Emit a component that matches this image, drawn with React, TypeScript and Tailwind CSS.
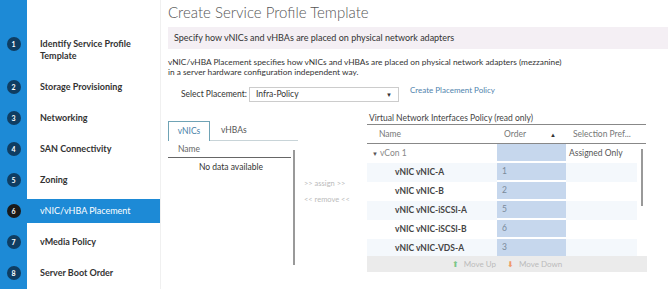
import React from "react";

const steps = [
  { n: 1, label: ["Identify Service Profile", "Template"] },
  { n: 2, label: ["Storage Provisioning"] },
  { n: 3, label: ["Networking"] },
  { n: 4, label: ["SAN Connectivity"] },
  { n: 5, label: ["Zoning"] },
  { n: 6, label: ["vNIC/vHBA Placement"], active: true },
  { n: 7, label: ["vMedia Policy"] },
  { n: 8, label: ["Server Boot Order"] },
];

const rows = [
  { name: "vNIC vNIC-A", order: "1" },
  { name: "vNIC vNIC-B", order: "2" },
  { name: "vNIC vNIC-iSCSI-A", order: "5" },
  { name: "vNIC vNIC-iSCSI-B", order: "6" },
  { name: "vNIC vNIC-VDS-A", order: "3" },
];

function Sidebar() {
  return (
    <div className="w-[160px] shrink-0 h-full bg-[linear-gradient(to_right,#1d8ad6_27px,#ffffff_27px)] pt-[32px] flex flex-col gap-[7px]">
      {steps.map((s) => (
        <div
          key={s.n}
          className={`flex items-start min-h-[24px] ${s.active ? "bg-[#1d8ad6]" : ""}`}
        >
          <div className="w-[27px] shrink-0 flex justify-center pt-[5px]">
            <div
              className={`w-[14px] h-[14px] rounded-full flex items-center justify-center text-[7px] font-bold text-white ${
                s.active ? "bg-[#1a1a1a]" : "bg-[#0f3d62]"
              }`}
            >
              {s.n}
            </div>
          </div>
          <div
            className={`pl-[13px] pt-[6px] pb-[6px] text-[9px] leading-[12px] ${
              s.active ? "text-white font-normal" : "text-[#333] font-bold"
            }`}
          >
            {s.label.map((l) => (
              <div key={l}>{l}</div>
            ))}
          </div>
        </div>
      ))}
    </div>
  );
}

function LeftPanel() {
  return (
    <div className="w-[130px] shrink-0 mt-[10px]">
      <div className="flex items-end h-[19px] border-b border-[#c8d4d8]">
        <div className="w-[42px] h-[20px] border border-b-0 border-[#6fa3b5] bg-white -mb-px flex items-center justify-center text-[8.5px] text-[#4a7fa8]">
          vNICs
        </div>
        <div className="ml-[11px] h-[19px] flex items-center text-[8.5px] text-[#555]">vHBAs</div>
      </div>
      <div className="flex">
        <div className="w-[123px]">
          <div className="h-[17px] border-b border-[#666] flex items-center pl-[10px] text-[8.5px] text-[#666]">
            Name
          </div>
          <div className="text-[8.5px] text-[#333] pl-[31px] pt-[3px]">No data available</div>
        </div>
        <div className="w-[2px] h-[115px] bg-[#999] ml-[2px] mt-[9px]" />
      </div>
    </div>
  );
}

function Middle() {
  return (
    <div className="w-[69px] shrink-0 pl-[6px] pt-[66px] flex flex-col gap-[5px] text-[7.5px] text-[#bbb] leading-[11px]">
      <div>&gt;&gt; assign &gt;&gt;</div>
      <div>&lt;&lt; remove &lt;&lt;</div>
    </div>
  );
}

function RightPanel() {
  return (
    <div className="w-[282px] shrink-0">
      <div className="w-[279px] h-[13px] border-b border-[#888] text-[8.5px] leading-[12px] text-[#444] pl-[2px]">
        Virtual Network Interfaces Policy (read only)
      </div>
      <div className="w-[279px] h-[19px] border-b border-[#888] flex items-center text-[8.5px] text-[#777]">
        <div className="w-[130px] pl-[12px]">Name</div>
        <div className="w-[69px] pl-[7px] flex items-center justify-between pr-[10px]">
          <span>Order</span>
          <span className="text-[6px] text-[#333]">▲</span>
        </div>
        <div className="pl-[7px]">Selection Pref...</div>
      </div>
      <div className="relative h-[112px] overflow-hidden w-[282px]">
        <div className="w-[270px] flex h-[19px] text-[8.5px]">
          <div className="w-[130px] pl-[5px] flex items-center text-[#888]">
            <span className="text-[6px] mr-[2px] text-[#555]">▼</span>vCon 1
          </div>
          <div className="w-[69px] bg-[#c6d7ed] border-b-2 border-white" />
          <div className="pl-[3px] flex items-center text-[#555]">Assigned Only</div>
        </div>
        {rows.map((r, i) => (
          <div
            key={r.name}
            className={`w-[270px] flex h-[19px] text-[8.5px] ${i % 2 === 0 ? "bg-[#f4f8fc]" : "bg-white"}`}
          >
            <div className="w-[130px] pl-[28px] flex items-center font-bold text-[#444]">{r.name}</div>
            <div className="w-[69px] bg-[#c6d7ed] border-b-2 border-white flex items-center pl-[5px] text-[#7a8a9a]">
              {r.order}
            </div>
            <div />
          </div>
        ))}
        <div className="absolute left-[274px] top-[5px] w-[2px] h-[57px] bg-[#999]" />
      </div>
      <div className="w-[280px] h-[16px] bg-[#ebebeb] flex items-center justify-center text-[8px] text-[#bbb] gap-[5px]">
        <span className="text-[#7cc68a] text-[8px]">⬆</span>
        <span>Move Up</span>
        <span className="text-[#ef9a6a] text-[8px] ml-[6px]">⬇</span>
        <span>Move Down</span>
      </div>
    </div>
  );
}

export default function App() {
  return (
    <div
      className="w-[668px] h-[289px] overflow-hidden flex bg-white"
      style={{ fontFamily: "Lato, 'Liberation Sans', sans-serif" }}
    >
      <Sidebar />
      <div className="flex-1 pl-[7px] pt-[1px] border-l border-[#f0f0f0]">
        <div className="text-[15px] font-light text-[#555] leading-[22px] h-[26px]">
          Create Service Profile Template
        </div>
        <div className="h-[22px] bg-[#f4eff4] flex items-center pl-[6px] text-[9px] text-[#333]">
          Specify how vNICs and vHBAs are placed on physical network adapters
        </div>
        <div className="mt-[8px] text-[8.3px] leading-[10px] text-[#333]">
          <div>vNIC/vHBA Placement specifies how vNICs and vHBAs are placed on physical network adapters (mezzanine)</div>
          <div>in a server hardware configuration independent way.</div>
        </div>
        <div className="flex items-center mt-[9px] h-[16px]">
          <div className="w-[81px] pl-[13px] text-[8.5px] text-[#333]">Select Placement:</div>
          <div className="w-[150px] h-[15px] border border-[#ccc] flex items-center justify-between px-[6px] text-[8.5px] text-[#333]">
            <span>Infra-Policy</span>
            <span className="text-[6px]">▼</span>
          </div>
          <div className="ml-[11px] -mt-[8px] text-[8px] text-[#4f83ad]">Create Placement Policy</div>
        </div>
        <div className="flex mt-[10px]">
          <LeftPanel />
          <Middle />
          <RightPanel />
        </div>
      </div>
    </div>
  );
}
